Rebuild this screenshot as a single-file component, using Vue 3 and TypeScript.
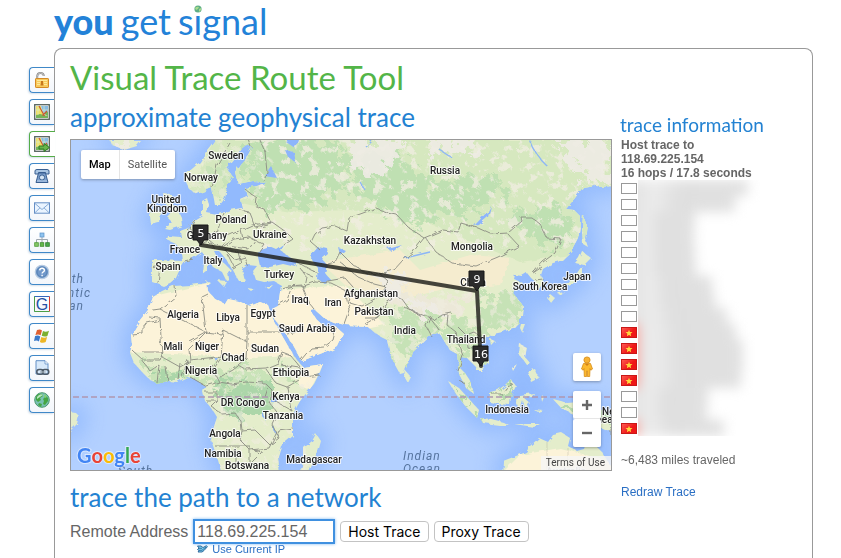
<script setup lang="ts">
import { onMounted, ref } from 'vue'

interface MapLabel {
  text: string
  x: number
  y: number
}

interface Marker {
  hop: number
  x: number
  y: number
}

interface Hop {
  vietnam: boolean
  width: number
}

const tabs = [
  'Port Forwarding Tester',
  'Network Location',
  'Visual Trace Route',
  'Phone Number Location',
  'Email',
  'Reverse IP Domain Check',
  'WHOIS Lookup',
  'Google Search',
  'Windows Tools',
  'Link Tools',
  'What Is My IP Address'
]
const activeTab = 2

const labels: MapLabel[] = [
  { text: 'Sweden', x: 226, y: 159 },
  { text: 'Norway', x: 201, y: 181 },
  { text: 'Russia', x: 445, y: 174 },
  { text: 'United', x: 166, y: 203 },
  { text: 'Kingdom', x: 167, y: 212 },
  { text: 'Poland', x: 231, y: 223 },
  { text: 'Germany', x: 207, y: 239 },
  { text: 'Ukraine', x: 270, y: 238 },
  { text: 'France', x: 185, y: 253 },
  { text: 'Italy', x: 213, y: 264 },
  { text: 'Spain', x: 168, y: 270 },
  { text: 'Turkey', x: 279, y: 278 },
  { text: 'Kazakhstan', x: 370, y: 244 },
  { text: 'Mongolia', x: 472, y: 250 },
  { text: 'China', x: 473, y: 286 },
  { text: 'Japan', x: 577, y: 280 },
  { text: 'South Korea', x: 540, y: 290 },
  { text: 'Iraq', x: 300, y: 303 },
  { text: 'Iran', x: 333, y: 306 },
  { text: 'Afghanistan', x: 371, y: 297 },
  { text: 'Pakistan', x: 374, y: 315 },
  { text: 'Algeria', x: 183, y: 318 },
  { text: 'Libya', x: 228, y: 321 },
  { text: 'Egypt', x: 263, y: 317 },
  { text: 'Saudi Arabia', x: 307, y: 332 },
  { text: 'India', x: 405, y: 334 },
  { text: 'Thailand', x: 466, y: 343 },
  { text: 'Mali', x: 173, y: 350 },
  { text: 'Niger', x: 207, y: 350 },
  { text: 'Chad', x: 233, y: 361 },
  { text: 'Sudan', x: 265, y: 352 },
  { text: 'Nigeria', x: 201, y: 374 },
  { text: 'Ethiopia', x: 291, y: 376 },
  { text: 'Kenya', x: 286, y: 400 },
  { text: 'DR Congo', x: 243, y: 406 },
  { text: 'Tanzania', x: 283, y: 419 },
  { text: 'Angola', x: 225, y: 437 },
  { text: 'Namibia', x: 223, y: 457 },
  { text: 'Botswana', x: 247, y: 469 },
  { text: 'Madagascar', x: 314, y: 463 },
  { text: 'Indonesia', x: 507, y: 413 },
  { text: 'New', x: 612, y: 415 },
  { text: 'Guinea', x: 597, y: 423 }
]

const markers: Marker[] = [
  { hop: 5, x: 201, y: 245 },
  { hop: 9, x: 477, y: 291 },
  { hop: 16, x: 481, y: 366 }
]

const hops: Hop[] = [
  { vietnam: false, width: 110 },
  { vietnam: false, width: 97 },
  { vietnam: false, width: 57 },
  { vietnam: false, width: 56 },
  { vietnam: false, width: 57 },
  { vietnam: false, width: 58 },
  { vietnam: false, width: 74 },
  { vietnam: false, width: 77 },
  { vietnam: false, width: 89 },
  { vietnam: true, width: 98 },
  { vietnam: true, width: 105 },
  { vietnam: true, width: 105 },
  { vietnam: true, width: 103 },
  { vietnam: false, width: 70 },
  { vietnam: false, width: 69 },
  { vietnam: true, width: 86 }
]

const address = ref('118.69.225.154')
const addressBox = ref<HTMLInputElement | null>(null)

onMounted(() => {
  const box = addressBox.value
  if (!box) return
  box.focus()
  box.setSelectionRange(address.value.length, address.value.length)
})
</script>

<template>
  <div class="page">
    <header class="logo">
      <a href="#" class="brand">
        <strong>you</strong><span>get</span><span class="signal">signal<svg class="dot" viewBox="0 0 8 8">
          <circle cx="4" cy="4" r="3.6" fill="#5fae86" />
          <path d="M1 3Q3 1 5 2L4 4 2 5ZM5 4L7 3 7 5 5 7Z" fill="#a9dc8c" />
        </svg></span>
      </a>
    </header>

    <div class="body">
      <nav class="tabs" aria-label="Tools">
        <a v-for="(tab, i) in tabs" :key="tab" href="#" class="tab" :class="{ active: i === activeTab }" :aria-label="tab">
          <svg viewBox="0 0 16 16" class="icon">
            <g v-if="i === 0">
              <path d="M3.2 7V4.4Q3.4 1 6.5 1T9.8 4" fill="none" stroke="#8b8b8b" stroke-width="2" />
              <path d="M3.2 6V4.4Q3.4 1 6.5 1T9.8 4" fill="none" stroke="#d4d4d4" stroke-width=".7" />
              <rect x="1.5" y="6.5" width="13" height="9" rx=".6" fill="#f8ca5c" stroke="#d58a25" />
              <path d="M3 8.5H13M3 10.5H6M10 10.5H13M3 12.5H6M10 12.5H13" stroke="#fff0a8" stroke-width=".8" />
              <path d="M7 9H9V11L9.5 13.5H6.5L7 11Z" fill="#c7761c" />
            </g>
            <g v-else-if="i === 1 || i === 2">
              <rect x=".7" y=".7" width="14.6" height="14.6" fill="#fff" stroke="#56645f" stroke-width="1.3" />
              <path d="M2 2H7L10 14H2Z" fill="#f0df63" />
              <path d="M7 2H14V10L9 9Z" fill="#88bce4" />
              <path d="M2 11L6 10 14 12V14H2ZM12 8H14V12L10 10Z" fill="#76b45b" />
              <path d="M2 6H14M10 2V9M4 2V11" stroke="#d9edc8" stroke-width=".7" />
              <path d="M5 2L10.5 12M8.5 11.5L13 7" fill="none" stroke="#c85a32" stroke-width="1.2" />
              <path v-if="i === 2" d="M5 10H10V7.5L15.4 11.5 10 15.5V13H5Z" fill="#68b54a" stroke="#2f7d27" />
            </g>
            <g v-else-if="i === 3">
              <path d="M1 6V3Q1 1.5 3 1.5H13Q15 1.5 15 3V6H11.5V4.5H4.5V6Z" fill="#a9c5e3" stroke="#385f91" />
              <path d="M4.5 5H11.5L14 14.5H2Z" fill="#7c9fcc" stroke="#385f91" />
              <circle cx="8" cy="9.5" r="2.6" fill="#d4e4f3" stroke="#385f91" />
              <path d="M3 13H13" stroke="#b7d0eb" />
            </g>
            <g v-else-if="i === 4">
              <rect x=".5" y="2.8" width="15" height="10.4" fill="#eaf4ff" stroke="#668fc5" />
              <path d="M1 3.5L8 9.5 15 3.5M1 12.7L6 7.8M15 12.7L10 7.8" fill="none" stroke="#7ba3d3" stroke-width=".9" />
            </g>
            <g v-else-if="i === 5">
              <path d="M8 4V7M2.5 11V7.5H13.5V11M8 7V11" fill="none" stroke="#a0a8b0" />
              <rect x="6" y="1" width="4" height="4" fill="#8fc3ef" stroke="#5b92c8" stroke-width=".7" />
              <rect x=".7" y="10.7" width="3.6" height="3.6" fill="#86c766" stroke="#4b9a37" stroke-width=".8" />
              <rect x="6.2" y="10.7" width="3.6" height="3.6" fill="#66b84c" stroke="#3c8c2d" stroke-width=".8" />
              <rect x="11.7" y="10.7" width="3.6" height="3.6" fill="#4aa94a" stroke="#2e7e2e" stroke-width=".8" />
            </g>
            <g v-else-if="i === 6">
              <circle cx="8" cy="8" r="6.7" fill="#7198ca" stroke="#b7cbe2" stroke-width="1.2" />
              <circle cx="8" cy="8" r="5" fill="none" stroke="#517caf" stroke-width=".8" />
              <path d="M5.7 6.4Q5.9 4.3 8.1 4.3T10.4 6.4Q10.4 7.5 9 8.1 8.1 8.6 8.1 9.6M8.1 10.8V12.2" fill="none" stroke="#fff" stroke-width="1.4" />
            </g>
            <g v-else-if="i === 7">
              <path d="M.5 15.5V.5H15.5" fill="none" stroke="#3466bd" />
              <path d="M15.5.5V15.5" stroke="#d63a32" />
              <path d="M.5 .5V15.5H15.5" fill="none" stroke="#4b9e45" />
              <text x="8" y="13.5" text-anchor="middle" class="g-letter">G</text>
            </g>
            <g v-else-if="i === 8">
              <path d="M3 2Q6 .6 8 2.4L6.6 7.3Q4.4 5.8 1.4 7Z" fill="#df6030" />
              <path d="M9 3Q11.7 4.5 15 2.8L13.4 8Q10.8 9.3 7.7 7.8Z" fill="#7db030" />
              <path d="M1.1 8Q4 6.9 6.3 8.4L4.9 13.4Q2.7 12 0 13.1Z" fill="#3b79c9" />
              <path d="M7.3 8.9Q10 10.3 13.1 9L11.7 14Q8.9 15.7 5.9 13.9Z" fill="#edb626" />
            </g>
            <g v-else-if="i === 9">
              <path d="M2 .7H11L14 3.7V14H2Z" fill="#d8e9fa" stroke="#628fc5" />
              <path d="M11 .7V4H14" fill="#fff" stroke="#628fc5" stroke-width=".8" />
              <rect x="2.8" y="9.5" width="6.5" height="4.8" rx="2.3" fill="none" stroke="#4c5966" stroke-width="1.5" />
              <rect x="8.3" y="9.5" width="6.5" height="4.8" rx="2.3" fill="none" stroke="#4c5966" stroke-width="1.5" />
              <path d="M6 12H11.7" stroke="#a0adb8" stroke-width="1.3" />
            </g>
            <g v-else>
              <circle cx="8" cy="8" r="7.3" fill="#79c0b4" stroke="#4a986b" />
              <path d="M2 5Q4 1 8 2L9 4 6 6 7 8 4 10 2 8ZM9 7L12 4 14 6 14 9 11 13 9 12 10 9ZM5 11L8 12 7 15 4 13Z" fill="#45a643" />
              <path d="M3 5Q6 1 9 3 6 5 3 7Z" fill="#b9e6bf" />
              <path d="M11 2L13 5 11 6 10 4Z" fill="#83cf72" />
            </g>
          </svg>
        </a>
      </nav>

      <main class="panel">
        <section class="content">
          <h1>Visual Trace Route Tool</h1>
          <h2>approximate geophysical trace</h2>

          <div class="map">
            <svg class="canvas" viewBox="71 140 540 330" role="img" aria-label="World map with traced route">
              <defs>
                <filter id="coast" x="-5%" y="-5%" width="110%" height="110%">
                  <feTurbulence type="fractalNoise" baseFrequency=".13" numOctaves="3" seed="4" result="n" />
                  <feDisplacementMap in="SourceGraphic" in2="n" scale="5" color-interpolation-filters="sRGB" />
                </filter>
                <filter id="ragged" x="-15%" y="-15%" width="130%" height="130%" color-interpolation-filters="sRGB">
                  <feTurbulence type="fractalNoise" baseFrequency=".08" numOctaves="4" seed="9" result="n" />
                  <feDisplacementMap in="SourceGraphic" in2="n" scale="40" xChannelSelector="R" yChannelSelector="G" />
                  <feGaussianBlur stdDeviation=".7" />
                </filter>
                <filter id="speckle" x="0" y="0" width="100%" height="100%" color-interpolation-filters="sRGB">
                  <feTurbulence type="fractalNoise" baseFrequency=".11" numOctaves="4" seed="17" />
                  <feColorMatrix values="0 0 0 0 .94  0 0 0 0 .93  0 0 0 0 .88  9 0 0 0 -5" />
                  <feComposite in2="SourceAlpha" operator="in" />
                </filter>
                <filter id="shelf" x="-10%" y="-10%" width="120%" height="120%" color-interpolation-filters="sRGB">
                  <feGaussianBlur stdDeviation="11" />
                </filter>
                <g id="land">
                  <path d="M152 260L160 260 182 261 181 251 176 244 167 240 168 236 181 237 180 231 188 228 194 220 202 215 202 201 207 198 209 205 207 213 217 215 230 210 242 208 240 199 247 196 245 188 257 186 267 182 253 181 238 184 235 172 240 164 248 155 252 147 246 145 240 150 234 160 227 169 232 176 227 185 225 198 220 205 215 205 212 188 207 190 197 194 190 190 186 182 185 175 193 168 200 162 207 150 218 136 L615 136 615 186 600 187 594 185 583 187 575 198 566 209 574 210 580 216 580 226 578 238 571 251 561 261 553 263 543 269 541 275 544 284 540 290 535 290 535 281 531 278 527 273 522 276 515 275 514 279 523 283 516 287 513 293 520 302 524 307 523 316 518 323 513 328 503 332 493 334 487 338 480 337 478 344 487 354 488 362 481 371 477 371 475 366 468 359 462 358 460 368 465 373 471 382 474 394 466 388 459 374 457 354 450 350 446 344 440 334 428 336 421 343 412 351 409 361 404 373 400 374 395 365 390 354 387 340 381 337 375 333 367 326 345 325 333 322 324 318 315 310 311 311 317 320 326 328 334 325 343 333 337 346 325 352 302 361 293 345 285 333 273 317 272 309 278 306 281 285 274 281 264 282 256 280 253 271 257 266 248 265 242 269 245 281 239 281 233 271 227 260 219 251 214 251 217 257 225 264 231 270 228 272 229 279 226 280 222 272 213 267 207 259 202 252 193 258 185 262 179 271 176 278 170 283 163 286 158 284 152 282Z" />
                  <path d="M153 297L162 291 173 286 190 285 207 283 208 291 215 299 225 304 228 299 238 301 250 306 260 302 268 305 272 317 280 332 288 346 297 360 303 367 323 364 320 372 314 384 300 401 293 414 293 436 281 446 278 456 280 475 222 475 218 460 211 440 213 430 217 417 212 409 205 401 203 392 205 386 195 379 187 377 177 382 168 381 157 384 149 379 142 372 134 363 130 353 132 345 131 335 140 320 148 310Z" />
                  <path d="M110 140L140 140 136 145 123 149 112 145Z" />
                  <path d="M163 193L171 194 171 202 177 209 181 217 182 226 170 230 165 229 172 222 167 217 172 211 166 204Z" />
                  <path d="M153 209L160 211 159 223 151 225 150 216Z" />
                  <path d="M205 280L211 283 207 286ZM217 280L226 281 223 286ZM204 262L207 261 207 272 203 275ZM247 288L254 289 251 291ZM266 288L274 286 270 290Z" />
                  <path d="M583 215L587 224 585 238 588 247 583 244 582 229Z" />
                  <path d="M582 251L591 258 584 265 575 263 579 258ZM582 266L582 275 575 284 562 288 551 291 554 287 566 284 571 278 577 273ZM550 294L555 298 551 303 547 298ZM559 293L565 292 560 296Z" />
                  <path d="M521 324L525 324 522 332 520 328ZM490 339L495 341 491 345ZM520 344L526 347 524 356 530 363 526 364 519 354ZM528 371L535 369 539 378 531 382ZM512 368L517 364 513 371Z" />
                  <path d="M405 370L410 376 407 382 404 377Z" />
                  <path d="M449 382L459 388 470 400 479 410 477 418 466 407 456 394Z" />
                  <path d="M490 392L498 390 505 385 511 379 516 386 511 396 510 405 498 404 490 402Z" />
                  <path d="M480 418L491 419 503 422 509 425 499 425 483 423ZM514 424L526 424 540 424 534 427ZM519 395L534 393 532 397 524 398 530 403 525 408 523 401 520 411 517 402Z" />
                  <path d="M553 399L561 401 567 403 579 402 597 407 612 417 612 432 599 427 589 423 575 415 562 409ZM541 394L544 397 542 402ZM533 409L543 410 538 412Z" />
                  <path d="M502 475L503 461 516 456 526 452 530 446 539 438 548 442 553 435 562 433 570 438 568 446 578 452 585 450 591 432 595 445 602 452 612 468 612 475Z" />
                  <path d="M316 434L320 440 316 455 308 475 301 470 304 457 304 448 312 441Z" />
                  <path d="M68 411L75 412 79 416 77 424 68 433Z" />
                </g>
                <mask id="landMask" maskUnits="userSpaceOnUse" x="60" y="130" width="560" height="350">
                  <use href="#land" fill="#fff" />
                </mask>
              </defs>

              <rect x="71" y="140" width="540" height="330" fill="#b3d0ff" />
              <use href="#land" fill="#8fb8fd" stroke="#8fb8fd" stroke-width="16" filter="url(#shelf)" opacity=".9" />

              <g filter="url(#coast)">
                <use href="#land" fill="#e4edcb" />
                <g mask="url(#landMask)">
                  <path d="M214 140H612V205L570 255 520 262 420 220 350 210 290 212 250 205 190 190Z" fill="#d6e8bf" />
                  <g fill="#fcf3d9">
                    <path d="M130 302L208 283 282 305 300 335 295 356 250 358 195 355 128 352Z" />
                    <path d="M275 290L345 285 385 325 343 334 335 350 302 362 278 330Z" />
                    <path d="M302 365L324 363 310 390 298 385Z" />
                    <path d="M320 262L400 250 420 270 470 255 510 258 500 285 440 290 400 300 345 285Z" fill="#f5eccf" />
                    <path d="M500 475L520 455 560 448 612 462V475Z" />
                  </g>
                  <g filter="url(#ragged)">
                    <path d="M245 142L340 140 350 185 315 205 260 208 250 185ZM345 160L400 150 430 185 490 175 505 195 470 215 400 210 365 195ZM375 205L440 205 430 225 390 220ZM510 215L545 205 575 220 560 250 530 240Z" fill="#bcdfb0" opacity=".9" />
                    <path d="M215 155L235 155 225 185 215 200ZM150 362L200 377 240 365 290 372 300 380 250 385 200 383 140 374Z" fill="#c9e3b8" />
                    <path d="M215 385L270 380 275 415 240 420 217 405ZM155 374L180 372 180 383 155 384Z" fill="#acd6a9" />
                    <path d="M435 320L475 325 485 365 460 345 470 390 445 345ZM390 310L440 318 410 360 392 350ZM480 300L522 295 520 325 480 335Z" fill="#c6e2b6" />
                    <path d="M450 380L480 420 470 415ZM490 390L515 382 508 405ZM555 400L611 410V430L580 415Z" fill="#b5d9ac" />
                    <path d="M420 295L470 300 465 320 430 315 390 305 385 285Z" fill="#ece8d8" />
                  </g>
                  <rect x="260" y="140" width="351" height="110" fill="#fff" filter="url(#speckle)" opacity=".8" />
                  <rect x="180" y="140" width="90" height="80" fill="#fff" filter="url(#speckle)" opacity=".5" />
                  <rect x="210" y="365" width="100" height="106" fill="#fff" filter="url(#speckle)" opacity=".6" />
                  <rect x="380" y="290" width="145" height="90" fill="#fff" filter="url(#speckle)" opacity=".6" />
                  <g fill="#efece5" filter="url(#ragged)" opacity=".9">
                    <path d="M350 140L400 140 392 163 372 175 352 166ZM430 140L475 140 470 158 435 155ZM560 140L612 140V182L590 180 570 162ZM372 272L402 272 400 305 375 285ZM112 140H140L125 149Z" />
                    <path d="M405 302L445 312 435 320 405 308Z" />
                  </g>
                </g>
                <g fill="#8db5fb">
                  <path d="M258 257L261 250 270 247 277 250 284 245 281 251 290 257 298 262 296 267 283 264 270 267 260 266Z" />
                  <path d="M312 252L317 246 327 248 328 254 322 259 327 265 325 273 331 280 325 284 317 279 318 268 311 259Z" />
                  <path d="M474 226L488 211 491 206 488 217 479 225ZM264 176L271 166 277 178ZM285 150L294 152 296 163 288 157ZM388 249L402 245 392 252ZM338 247L345 250 340 255ZM286 142L299 136 295 148ZM272 398L277 396 277 403 272 403ZM262 410L265 420 262 416ZM274 426L277 435 274 431ZM214 357L218 358 216 361Z" />
                </g>
                <path d="M530 140Q535 155 547 166M440 150L452 158M405 258L430 252M366 147L372 141M360 182L365 190" fill="none" stroke="#8cb6f7" stroke-width="1.3" />
                <g fill="none" stroke="#8b8c82" stroke-width=".9" stroke-linejoin="round">
                  <path d="M212 188L217 165 230 143M251 147L247 136M262 180L267 172 265 152 260 140M245 189L257 198 256 207 265 210 271 223 255 227 249 212 240 210M224 213L219 226 216 238 230 235 243 229 252 225M195 220L189 227 194 235 200 245 196 254M187 229L194 235M216 232L208 239 214 244 224 246 234 239 249 237 255 240 249 249 234 247 225 250 235 260 245 257 248 266M241 230L243 239M255 240L265 245 260 252M252 225L272 222 286 232 293 239 284 245M184 261L193 259M152 268L160 266 158 283M225 250L238 252 241 263 232 268M228 255L233 265M200 245L210 242 216 250" />
                  <path d="M297 262L311 270 318 273M300 268L306 276 304 286 292 286 282 289M303 272L312 276M292 286L287 300 278 305M288 286L302 285 309 303 315 310M304 286L315 282 331 283 345 290 349 310 344 324M318 248L311 242 315 234 322 228 335 226 347 231 349 218 363 213 376 208 386 212 396 214 409 228 424 238 413 252 403 260 394 270 380 274 366 273 353 265 340 252 335 262 328 264M328 281L345 278 353 287 349 302 362 306 378 297 386 287 374 284 358 277 340 262M378 272L388 281 384 291 392 299 385 304 377 318 365 318M386 291L402 299 410 310 435 320 442 315 452 313M365 324L379 316 386 307M403 306L421 316M430 318L439 330M432 316L427 327 432 337" />
                  <path d="M424 238L443 230 458 232 461 223 478 228 491 234 508 233 522 221 521 217 531 217 540 224 547 238 561 239 555 253 543 262 534 272M425 237L436 252 452 263 476 266 498 257 519 246 507 233M448 314L447 325 456 332 458 342 463 356 458 371M459 328L467 336 475 333 483 338M467 336L468 348 479 350 481 361M458 341L468 336M533 273L542 267M535 280L543 279M492 394L502 394 506 388 513 384M611 408V435M459 380L464 383" />
                  <path d="M175 286L176 296 160 309 153 310M160 309L206 332 202 297 208 294M206 332L189 349 190 361 180 367 162 357 160 318 149 317M189 341L205 332 221 334 223 330 247 342 247 305M223 330L221 358 216 357 190 360M247 332H280M247 342L246 358 238 365 245 369 266 368 278 363 282 352 290 355 300 367M221 358L213 370 219 382 206 386 190 377M188 360L182 377M180 363L178 380M166 367L168 381M159 365L157 383M143 352H163L160 360 143 360 132 350M142 360L150 371 159 365M219 382L231 384 246 382 265 383 272 390 270 403 278 414 273 425 279 438 270 445 255 430 242 431 240 440 250 450 269 448 278 430 293 428M266 369L276 383 287 387 299 380M281 365L300 368 304 377 320 375M287 387L291 410 273 400M205 392H217L217 402 212 407 222 414 235 413 241 421 242 431M215 446H250V464L262 452 253 450M235 450V470M206 401H218M132 335L143 334 143 324 160 320M301 360L311 348 324 347 333 340 336 328M287 334L298 332M267 387L264 396M220 377L233 370 238 366" />
                  <path d="M568 448V470M547 442V470" opacity=".3" />
                </g>
              </g>
              <path d="M73 397H611" stroke="#b096b0" stroke-width="1.6" stroke-dasharray="6 3" />

              <g class="ocean">
                <text x="84" y="283" text-anchor="end">North</text>
                <text x="91" y="297" text-anchor="end">Atlantic</text>
                <text x="84" y="310" text-anchor="end">Ocean</text>
                <text x="118" y="475">South</text>
                <text x="403" y="460">Indian</text>
                <text x="403" y="473">Ocean</text>
              </g>
              <g class="labels">
                <text v-for="label in labels" :key="label.text" :x="label.x" :y="label.y">{{ label.text }}</text>
                <text x="566" y="475" class="faint">Australia</text>
              </g>

              <path d="M201 245L477 291 481 366" fill="none" stroke="#1d1d18" stroke-opacity=".82" stroke-width="4" stroke-linejoin="round" stroke-linecap="round" />
              <g v-for="marker in markers" :key="marker.hop" class="marker">
                <path :d="`M${marker.x - 8} ${marker.y - 20}h15v15h-4l-3 5-4-5h-4z`" />
                <text :x="marker.x" :y="marker.y - 8">{{ marker.hop }}</text>
              </g>
              <text x="77" y="463" class="google">
                <tspan fill="#4285f4">G</tspan><tspan fill="#ea4335">o</tspan><tspan fill="#fbbc05">o</tspan><tspan fill="#4285f4">g</tspan><tspan fill="#34a853">l</tspan><tspan fill="#ea4335">e</tspan>
              </text>
            </svg>

            <div class="map-type">
              <button type="button" class="selected">Map</button>
              <button type="button">Satellite</button>
            </div>
            <div class="map-tools">
              <button type="button" class="pegman" aria-label="Street View">
                <svg viewBox="0 0 14 22">
                  <circle cx="7" cy="4" r="3.1" fill="#f8b234" stroke="#d58b18" stroke-width=".8" />
                  <path d="M3.5 7.5H10.5L12.5 13 10.8 14.2 10 12.5 9.7 20.5H7.4V15H6.6V20.5H4.3L4 12.5 3.2 14.2 1.5 13Z" fill="#fcb92f" stroke="#d58b18" stroke-width=".8" />
                  <path d="M5 8L7 10 9 8Z" fill="#d47f15" />
                </svg>
              </button>
              <div class="zoom">
                <button type="button" aria-label="Zoom in">
                  <svg viewBox="0 0 12 12"><path d="M6 1V11M1 6H11" stroke="#666" stroke-width="2.4" /></svg>
                </button>
                <button type="button" aria-label="Zoom out">
                  <svg viewBox="0 0 12 12"><path d="M1 6H11" stroke="#666" stroke-width="2.4" /></svg>
                </button>
              </div>
            </div>
            <a href="#" class="terms">Terms of Use</a>
          </div>

          <h2 class="network">trace the path to a network</h2>
          <form class="trace-form" @submit.prevent>
            <label for="address">Remote Address</label>
            <input id="address" ref="addressBox" v-model="address" type="text" autocomplete="off" spellcheck="false" />
            <button type="submit">Host Trace</button>
            <button type="button">Proxy Trace</button>
            <a href="#" class="current">
              <svg viewBox="0 0 11 8">
                <path d="M.5 1H4L6 2.5 9.5.7 10.4 1.7 7 5.5 5 7H1L2 5.5.5 4.5 2 3Z" fill="#7ed0ef" stroke="#235f94" stroke-width=".9" />
                <path d="M2 3.3H5M2 5.3H5L9 2" fill="none" stroke="#235f94" stroke-width=".8" />
              </svg>
              <span>Use Current IP</span>
            </a>
          </form>
        </section>

        <aside class="info">
          <h3>trace information</h3>
          <p class="summary">Host trace to<br />118.69.225.154<br />16 hops / 17.8 seconds</p>
          <div class="hops">
            <ul class="flags">
              <li v-for="(hop, i) in hops" :key="i" :class="{ vietnam: hop.vietnam }">
                <svg v-if="hop.vietnam" viewBox="0 0 10 10">
                  <path d="M5 .8L6.2 3.7 9.4 3.9 7 6 7.7 9.2 5 7.5 2.3 9.2 3 6 .6 3.9 3.8 3.7Z" fill="#ffd83d" />
                </svg>
              </li>
            </ul>
            <div class="redacted" aria-hidden="true">
              <div class="smear">
                <span v-for="(hop, i) in hops" :key="i" :class="{ vietnam: hop.vietnam }" :style="{ width: hop.width + 'px' }"></span>
              </div>
            </div>
          </div>
          <p class="miles">~6,483 miles traveled</p>
          <a href="#" class="redraw">Redraw Trace</a>
        </aside>
      </main>
    </div>
  </div>
</template>

<style>
body {
  background: #fff;
  overflow: hidden;
}
</style>

<style scoped>
.page {
  display: flex;
  flex-direction: column;
  min-height: 100vh;
  padding: 0 28px 0 29px;
  box-sizing: border-box;
  font-family: "Liberation Sans", Arial, sans-serif;
  color: #666;
}
h1, h2, h3, p, ul {
  margin: 0;
  padding: 0;
  font-weight: 400;
}
a {
  color: #2a6fc4;
  text-decoration: none;
}
.logo {
  height: 48px;
  padding-left: 25px;
}
.brand {
  display: inline-flex;
  gap: 7px;
  font: 400 36px/42px Lato, Carlito, sans-serif;
  color: #2382d8;
}
.brand strong {
  font-weight: 900;
}
.signal {
  position: relative;
}
.dot {
  position: absolute;
  left: 16px;
  top: 5px;
  width: 8px;
  height: 8px;
  background: #fff;
}
.body {
  display: grid;
  grid-template-columns: 25px minmax(0, 1fr);
  flex: 1;
}
.tabs {
  display: flex;
  flex-direction: column;
  gap: 6px;
  padding-top: 19px;
}
.tab {
  box-sizing: border-box;
  width: 25px;
  height: 26px;
  padding: 4px;
  border: 1px solid #3f88c8;
  border-right: 0;
  border-radius: 4px 0 0 4px;
  background: linear-gradient(#fff, #f3f6fb);
  box-shadow: -1px 1px 2px #d5dfea;
}
.tab.active {
  position: relative;
  width: 26px;
  border-color: #55ad48;
  background: #fff;
}
.icon {
  display: block;
  width: 16px;
  height: 16px;
}
.g-letter {
  font: 400 16px "Liberation Sans", Arial, sans-serif;
  fill: #2450a4;
}
.panel {
  display: grid;
  grid-template-columns: minmax(0, 1fr) 192px;
  gap: 8px;
  padding-left: 15px;
  border: 1px solid #999;
  border-bottom: 0;
  border-radius: 8px 8px 0 0;
}
h1 {
  padding-top: 8px;
  font: 400 33px/40px Lato, Carlito, sans-serif;
  color: #53b548;
}
h2 {
  margin-top: 4px;
  font: 400 26px/32px Lato, Carlito, sans-serif;
  color: #2382d2;
  white-space: nowrap;
}
.map {
  position: relative;
  margin-top: 6px;
  border: 1px solid #999;
}
.canvas {
  display: block;
  width: 100%;
  height: auto;
}
.labels text {
  font: 500 10px Roboto, sans-serif;
  text-anchor: middle;
  fill: #222;
  stroke: #fff;
  stroke-width: 2px;
  stroke-opacity: .8;
  stroke-linejoin: round;
  paint-order: stroke;
}
.labels .faint {
  fill: #aaa;
}
.ocean text {
  font: italic 400 12px Roboto, sans-serif;
  letter-spacing: 1px;
  fill: #56749f;
}
.marker path {
  fill: #2b2b2b;
  stroke: #161616;
}
.marker text {
  font: 400 11px "DejaVu Sans", sans-serif;
  text-anchor: middle;
  fill: #fff;
}
.google {
  font: 700 20px Lato, sans-serif;
  stroke: #fff;
  stroke-width: 2px;
  stroke-opacity: .5;
  paint-order: stroke;
}
.map-type {
  position: absolute;
  left: 10px;
  top: 10px;
  display: flex;
  border-radius: 2px;
  background: #fff;
  box-shadow: 0 1px 3px rgba(0, 0, 0, .3);
}
.map-type button {
  height: 29px;
  padding: 0 8px;
  border: 0;
  background: none;
  font: 400 11px Roboto, sans-serif;
  color: #565656;
}
.map-type .selected {
  border-right: 1px solid #e5e5e5;
  font-weight: 500;
  color: #000;
}
.map-tools {
  position: absolute;
  right: 10px;
  bottom: 23px;
  display: flex;
  flex-direction: column;
  gap: 10px;
}
.map-tools button {
  display: flex;
  align-items: center;
  justify-content: center;
  width: 28px;
  height: 28px;
  padding: 0;
  border: 0;
  border-radius: 2px;
  background: #fff;
}
.pegman, .zoom {
  border-radius: 2px;
  box-shadow: 0 1px 3px rgba(0, 0, 0, .3);
}
.pegman svg {
  width: 14px;
  height: 22px;
}
.zoom button:first-child {
  border-bottom: 1px solid #e6e6e6;
}
.zoom svg {
  width: 12px;
  height: 12px;
}
.terms {
  position: absolute;
  right: 0;
  bottom: 0;
  padding: 0 6px 0 5px;
  background: rgba(245, 245, 245, .8);
  font: 400 10px/14px Roboto, sans-serif;
  color: #444;
}
.network {
  margin-top: 10px;
}
.trace-form {
  display: grid;
  grid-template-columns: repeat(4, max-content);
  align-items: center;
  column-gap: 5px;
  padding-top: 6px;
}
.trace-form label {
  font-size: 16px;
}
.trace-form input {
  box-sizing: border-box;
  width: 142px;
  height: 25px;
  padding: 0 2px;
  border: 2px solid #3f90e0;
  outline: 0;
  box-shadow: 0 0 3px #7db8f2;
  font: 400 16px "Liberation Sans", Arial, sans-serif;
  color: #666;
}
.trace-form button {
  height: 21px;
  padding: 0 7px;
  border: 1px solid #c3c3c3;
  border-radius: 4px;
  background: #fff;
  font: 400 14px/18px Inter, sans-serif;
  color: #000;
}
.current {
  grid-column: 2 / -1;
  display: flex;
  align-items: center;
  gap: 4px;
  padding-left: 4px;
  font-size: 11px;
  line-height: 10px;
}
.current svg {
  width: 11px;
  height: 8px;
}
.info {
  padding-top: 64px;
  font-size: 12px;
}
.info h3 {
  font: 400 19px/24px Lato, Carlito, sans-serif;
  color: #2382d2;
}
.summary {
  padding: 1px 0 0 1px;
  font-weight: 700;
  line-height: 14px;
}
.hops {
  display: flex;
  gap: 1px;
  padding-left: 1px;
}
.flags {
  display: flex;
  flex-direction: column;
  gap: 5px;
  padding-top: 3px;
  list-style: none;
}
.flags li {
  display: flex;
  align-items: center;
  justify-content: center;
  box-sizing: border-box;
  width: 16px;
  height: 11px;
  border: 1px solid #999;
}
.flags .vietnam {
  border-color: #c91818;
  background: linear-gradient(135deg, #ff5a50, #ef1717 60%);
}
.flags svg {
  width: 8px;
  height: 8px;
}
.redacted {
  flex: 1;
  overflow: hidden;
}
.smear {
  display: flex;
  flex-direction: column;
  filter: blur(6px);
}
.smear span {
  height: 16px;
  margin-left: -10px;
  border-left: 10px solid #e4e4e4;
  background: linear-gradient(90deg, #e4e4e4, #ececec 15%, #dfdfdf 40%, #e1e1e1);
}
.smear .vietnam {
  border-left-color: #ff9c94;
}
.miles {
  padding: 16px 0 0 1px;
  line-height: 16px;
}
.redraw {
  display: inline-block;
  padding: 16px 0 0 1px;
  line-height: 16px;
}
</style>
